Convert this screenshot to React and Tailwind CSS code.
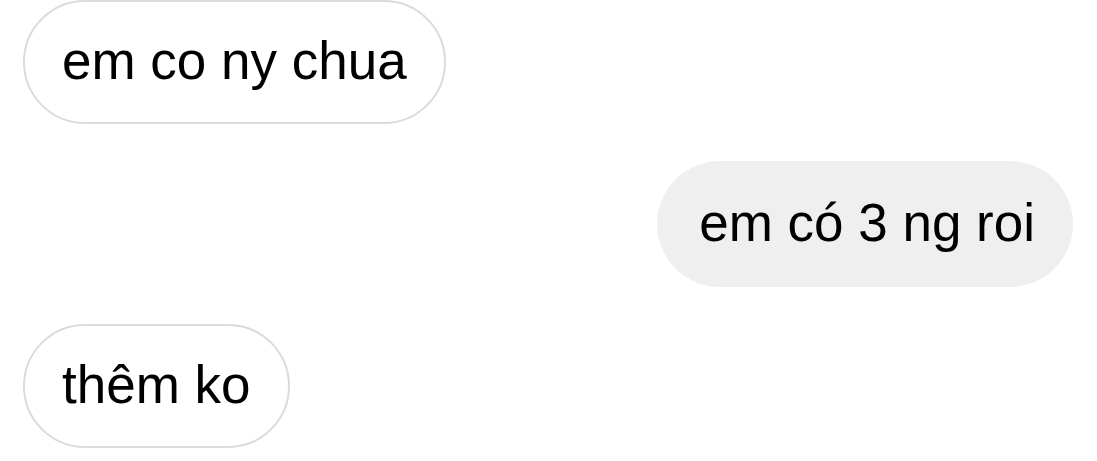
import React from "react";

const MESSAGES = [
  { id: 1, text: "em co ny chua", mine: false },
  { id: 2, text: "em có 3 ng roi", mine: true },
  { id: 3, text: "thêm ko", mine: false },
];

const Bubble = ({ text, mine }) => (
  <div className={mine ? "flex justify-end" : "flex justify-start"}>
    <div
      className={
        mine
          ? "h-[126px] pl-[42px] pr-[38px] flex items-center rounded-full bg-[#efefef] text-black"
          : "h-[124px] px-[37px] flex items-center rounded-full border-[2.5px] border-[#dbdbdb] bg-white text-black"
      }
    >
      <span className="text-[53px] leading-none pb-[3px]">{text}</span>
    </div>
  </div>
);

export default function App() {
  return (
    <div
      className="w-[1097px] h-[461px] bg-white pl-[23px] pr-[24px] flex flex-col gap-[37px] overflow-hidden"
      style={{ fontFamily: '"Liberation Sans", Arial, sans-serif' }}
    >
      {MESSAGES.map((m) => (
        <Bubble key={m.id} text={m.text} mine={m.mine} />
      ))}
    </div>
  );
}
